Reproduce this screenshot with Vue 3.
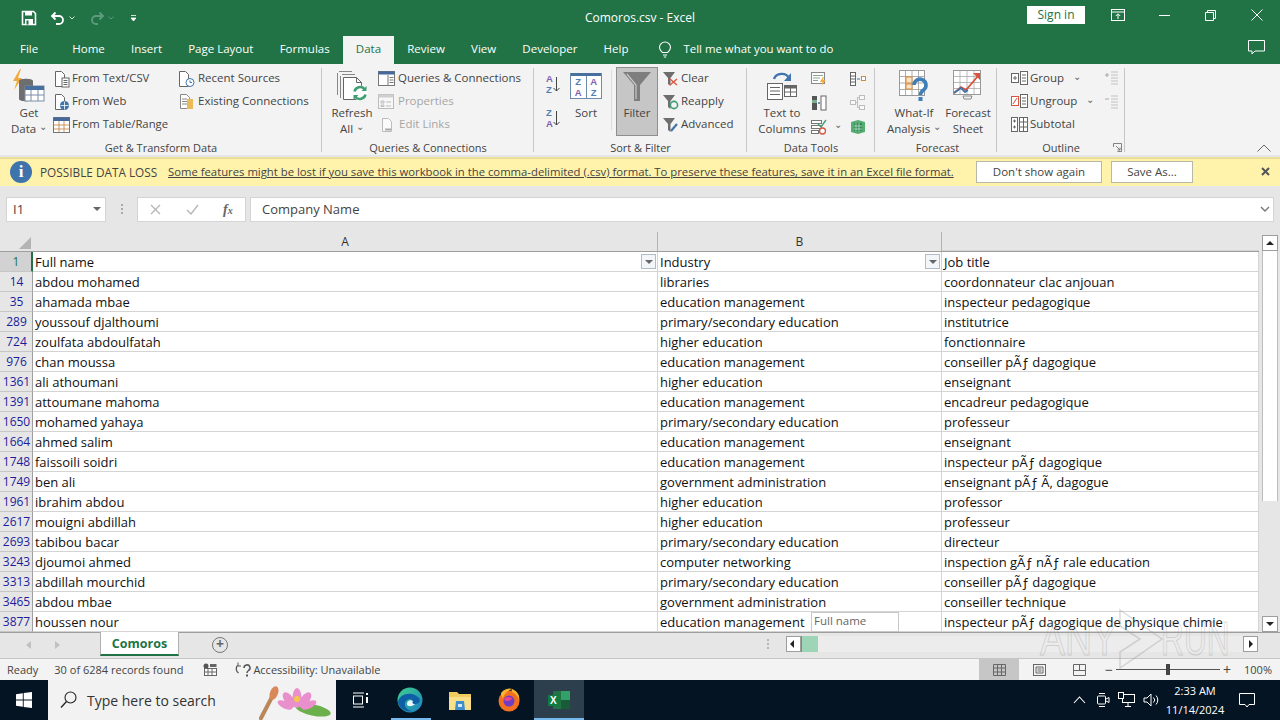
<script setup>
const rows = [
  ['14', 'abdou mohamed', 'libraries', 'coordonnateur clac anjouan'],
  ['35', 'ahamada mbae', 'education management', 'inspecteur pedagogique'],
  ['289', 'youssouf djalthoumi', 'primary/secondary education', 'institutrice'],
  ['724', 'zoulfata abdoulfatah', 'higher education', 'fonctionnaire'],
  ['976', 'chan moussa', 'education management', 'conseiller pÃƒ dagogique'],
  ['1361', 'ali athoumani', 'higher education', 'enseignant'],
  ['1391', 'attoumane mahoma', 'education management', 'encadreur pedagogique'],
  ['1650', 'mohamed yahaya', 'primary/secondary education', 'professeur'],
  ['1664', 'ahmed salim', 'education management', 'enseignant'],
  ['1748', 'faissoili soidri', 'education management', 'inspecteur pÃƒ dagogique'],
  ['1749', 'ben ali', 'government administration', 'enseignant pÃƒ Ã, dagogue'],
  ['1961', 'ibrahim abdou', 'higher education', 'professor'],
  ['2617', 'mouigni abdillah', 'higher education', 'professeur'],
  ['2693', 'tabibou bacar', 'primary/secondary education', 'directeur'],
  ['3243', 'djoumoi ahmed', 'computer networking', 'inspection gÃƒ nÃƒ rale education'],
  ['3313', 'abdillah mourchid', 'primary/secondary education', 'conseiller pÃƒ dagogique'],
  ['3465', 'abdou mbae', 'government administration', 'conseiller technique'],
  ['3877', 'houssen nour', 'education management', 'inspecteur pÃƒ dagogique de physique chimie']
]
const tabs = ['Home', 'Insert', 'Page Layout', 'Formulas', 'Data', 'Review', 'View', 'Developer', 'Help']
</script>

<template>
  <div class="app">
    <div class="titlebar">
      <div class="qat">
        <svg width="16" height="16" viewBox="0 0 16 16"><path d="M1.500 1.500h11l2 2v11h-13z" fill="none" stroke="#fff" stroke-width="1.600"/><rect x="4" y="1.500" width="7" height="4" fill="#fff"/><rect x="4" y="9" width="8" height="5.500" fill="#fff"/><rect x="5.500" y="10.500" width="2" height="4" fill="#217346"/></svg>
        <svg class="q-undo" width="16" height="14" viewBox="0 0 16 14"><path d="M5.500 1.500 2 5l3.500 3.500M2 5h7a4 4 0 0 1 0 8H6" fill="none" stroke="#fff" stroke-width="1.800"/></svg>
        <svg class="q-drop" width="6" height="4" viewBox="0 0 6 4"><path d="M.5.500 3 3 5.500.500" fill="none" stroke="#cfe3d8"/></svg>
        <svg class="q-redo" width="16" height="14" viewBox="0 0 16 14"><path d="M10.500 1.500 14 5l-3.500 3.500M14 5H7a4 4 0 0 0 0 8h2" fill="none" stroke="#5f9c7e" stroke-width="1.800"/></svg>
        <svg class="q-drop" width="6" height="4" viewBox="0 0 6 4"><path d="M.5.500 3 3 5.500.500" fill="none" stroke="#5f9c7e"/></svg>
        <svg class="q-more" width="7" height="7" viewBox="0 0 7 7"><path d="M1 .5h5M1 3h5L3.500 6z" fill="#fff" stroke="#fff" stroke-width=".8"/></svg>
      </div>
      <div class="doc-title">Comoros.csv  -  Excel</div>
      <div class="win-right">
        <div class="signin">Sign in</div>
        <svg class="w-display" width="14" height="12" viewBox="0 0 14 12"><rect x=".5" y=".5" width="13" height="11" fill="none" stroke="#fff"/><path d="M1 3h12M7 10V5M4.800 7 7 4.800 9.200 7" fill="none" stroke="#fff"/></svg>
        <svg class="w-min" width="11" height="1" viewBox="0 0 11 1"><rect width="11" height="1" fill="#fff"/></svg>
        <svg class="w-max" width="11" height="11" viewBox="0 0 11 11"><path d="M.5 2.500h8v8h-8zM2.500 2.500v-2h8v8h-2" fill="none" stroke="#fff"/></svg>
        <svg class="w-close" width="12" height="12" viewBox="0 0 12 12"><path d="M.5.500l11 11M11.500.500l-11 11" stroke="#fff"/></svg>
      </div>
    </div>

    <div class="tabbar">
      <div class="tab file">File</div>
      <div v-for="t in tabs" :key="t" class="tab" :class="{ active: t === 'Data' }">{{ t }}</div>
      <svg class="bulb" width="14" height="17" viewBox="0 0 14 17"><path d="M4.500 11.500C3 10 1.500 8.800 1.500 6.500a5.500 5.500 0 0 1 11 0c0 2.300-1.500 3.500-3 5zM5 14h4M5.800 16h2.400" fill="none" stroke="#fff" stroke-width="1.100"/></svg>
      <div class="tell">Tell me what you want to do</div>
      <svg class="comment" width="17" height="15" viewBox="0 0 17 15"><path d="M.5.500h16v10.500H7L4 14v-3H.5z" fill="none" stroke="#fff"/></svg>
    </div>

    <div class="ribbon">
      <div class="group g1">
        <div class="g-body">
          <div class="big w-get">
            <div class="big-icon">
              <svg width="34" height="34" viewBox="0 0 34 34"><path d="M8 0 1 12h4L2 21l8-12H6l3-9z" fill="#f2a93b"/><path d="M7 12c0-3 14-3 14 0v18c0 3-14 3-14 0z" fill="#6e6e6e"/><rect x="13" y="17" width="19" height="15" fill="#fff" stroke="#7a8ea6"/><rect x="13" y="17" width="19" height="4" fill="#47709e"/><path d="M19 21v11M26 21v11M13 26h19" stroke="#7a8ea6"/></svg>
            </div>
            <div class="big-text">Get<br>Data <span class="chev">⌄</span></div>
          </div>
          <div class="stack col-a">
            <div class="cmd"><svg width="16" height="18" viewBox="0 0 16 18"><path d="M1.500 1.500h6l3 3v12h-9z" fill="#fff" stroke="#666"/><rect x="8" y="8" width="7" height="9" fill="#fff" stroke="#666"/><path d="M9.500 10.500h4M9.500 12.500h4M9.500 14.500h4" stroke="#666"/></svg><span>From Text/CSV</span></div>
            <div class="cmd"><svg width="16" height="18" viewBox="0 0 16 18"><path d="M1.500 1.500h6l3 3v12h-9z" fill="#fff" stroke="#666"/><circle cx="10.500" cy="12.500" r="4.500" fill="#3f74ad"/><path d="M6.500 12.500h8M10.500 8.500v8" stroke="#fff" stroke-width=".8"/></svg><span>From Web</span></div>
            <div class="cmd tbl"><svg width="17" height="16" viewBox="0 0 17 16"><rect x=".5" y=".5" width="16" height="15" fill="#fff" stroke="#777"/><rect x=".5" y=".5" width="16" height="3.500" fill="#44699a"/><path d="M6 4v11M11 4v11M1 8h15M1 12h15" stroke="#c27f3a" stroke-width=".8"/></svg><span>From Table/Range</span></div>
          </div>
          <div class="stack col-b">
            <div class="cmd"><svg width="18" height="18" viewBox="0 0 18 18"><path d="M1.500 1.500h6l3 3v12h-9z" fill="#fff" stroke="#666"/><circle cx="12" cy="12.500" r="4" fill="#fff" stroke="#3f74ad"/><path d="M12 10.500v2h2" fill="none" stroke="#3f74ad"/></svg><span>Recent Sources</span></div>
            <div class="cmd"><svg width="18" height="18" viewBox="0 0 18 18"><path d="M2.500 1.500h6l3 3v11h-9z" fill="#fff" stroke="#888"/><path d="M4 6h5M4 8.500h5M4 11h5" stroke="#888"/><rect x="9" y="6" width="6" height="10" fill="#eab959"/></svg><span>Existing Connections</span></div>
          </div>
        </div>
        <div class="g-label">Get &amp; Transform Data</div>
      </div>

      <div class="group g2">
        <div class="g-body">
          <div class="big w-refresh">
            <div class="big-icon">
              <svg width="32" height="32" viewBox="0 0 32 32"><path d="M3 1.500h13M1.500 3v22" stroke="#888" fill="none"/><path d="M6 4.500h13M4.500 6v22" stroke="#888" fill="none"/><path d="M7.500 7.500h13l5 5v17h-18z" fill="#fff" stroke="#666"/><path d="M20.500 7.500v5h5" fill="none" stroke="#666"/><circle cx="24" cy="23" r="7.500" fill="#fff"/><path d="M18.500 21.500a5.800 5.800 0 0 1 10-2.500M29.500 24.500a5.800 5.800 0 0 1-10 2.500" fill="none" stroke="#3f9e72" stroke-width="2.600"/><path d="M30.500 16v5h-5zM17.500 30v-5h5z" fill="#3f9e72"/></svg>
            </div>
            <div class="big-text">Refresh<br>All <span class="chev">⌄</span></div>
          </div>
          <div class="stack col-q">
            <div class="cmd"><svg width="17" height="15" viewBox="0 0 17 15"><rect x=".5" y=".5" width="16" height="14" fill="#fff" stroke="#777"/><rect x=".5" y=".5" width="16" height="3" fill="#44699a"/><path d="M10 4v10M11.500 6.500h4M11.500 9h4M11.500 11.500h4" stroke="#777"/></svg><span>Queries &amp; Connections</span></div>
            <div class="cmd off"><svg width="17" height="15" viewBox="0 0 17 15"><rect x=".5" y=".5" width="15" height="14" fill="#f7f7f7" stroke="#bbb"/><rect x=".5" y=".5" width="15" height="3" fill="#cfcfcf"/><path d="M3 7h3v2H3zM3 11h3v1.500H3zM8 8h5M8 12h5" fill="none" stroke="#bbb"/></svg><span>Properties</span></div>
            <div class="cmd off el"><svg width="14" height="16" viewBox="0 0 14 16"><path d="M1.500 1.500h6l3 3v10h-9z" fill="#fbfbfb" stroke="#bbb"/><path d="M4 12.500h3M7 12.500h3" stroke="#aaa" stroke-width="2"/></svg><span>Edit Links</span></div>
          </div>
        </div>
        <div class="g-label">Queries &amp; Connections</div>
      </div>

      <div class="group g3">
        <div class="g-body">
          <div class="az-col">
            <div class="az"><span class="az-l"><b class="a1">A</b><b class="z1">Z</b></span><svg width="7" height="16" viewBox="0 0 7 16"><path d="M3.500 1v14M.5 12l3 3 3-3" fill="none" stroke="#444"/></svg></div>
            <div class="az"><span class="az-l"><b class="z1">Z</b><b class="a1">A</b></span><svg width="7" height="16" viewBox="0 0 7 16"><path d="M3.500 1v14M.5 12l3 3 3-3" fill="none" stroke="#444"/></svg></div>
          </div>
          <div class="big w-sort">
            <div class="big-icon">
              <div class="sort-ico">
                <div class="sort-h"></div>
                <div class="sort-g"><span><b class="z1">Z</b><b class="a1">A</b></span><span><b class="a1">A</b><b class="z1">Z</b></span></div>
              </div>
            </div>
            <div class="big-text">Sort</div>
          </div>
          <div class="thin"></div>
          <div class="big w-filter">
            <div class="big-icon">
              <svg width="28" height="29" viewBox="0 0 28 29"><path d="M0 0h28L17 13v16h-6V13z" fill="#7e7e7e"/><path d="M4 2l9 11v14" fill="none" stroke="#c9c9c9" stroke-width="1.200"/></svg>
            </div>
            <div class="big-text">Filter</div>
          </div>
          <div class="stack col-f">
            <div class="cmd"><svg width="17" height="16" viewBox="0 0 17 16"><path d="M1 1h12L8.500 7v8L6 13V7z" fill="#6e6e6e"/><path d="M8 8l7 6M15 8l-7 6" stroke="#e0563c" stroke-width="1.400"/></svg><span>Clear</span></div>
            <div class="cmd"><svg width="17" height="16" viewBox="0 0 17 16"><path d="M1 1h12L8.500 7v8L6 13V7z" fill="#6e6e6e"/><circle cx="12" cy="11" r="3.600" fill="none" stroke="#3f9e72" stroke-width="1.600"/></svg><span>Reapply</span></div>
            <div class="cmd"><svg width="17" height="16" viewBox="0 0 17 16"><path d="M1 1h12L8.500 7v8L6 13V7z" fill="#6e6e6e"/><path d="M9 14l6-7" stroke="#3f74ad" stroke-width="2.200"/></svg><span>Advanced</span></div>
          </div>
        </div>
        <div class="g-label">Sort &amp; Filter</div>
      </div>

      <div class="group g4">
        <div class="g-body">
          <div class="big w-text">
            <div class="big-icon">
              <svg width="32" height="32" viewBox="0 0 32 32"><path d="M8 9a8 7 0 0 1 15-1" fill="none" stroke="#3f74ad" stroke-width="2.400"/><path d="M25 3v8h-7z" fill="#3f74ad"/><rect x="1.500" y="13.500" width="15" height="16" fill="#fff" stroke="#666"/><path d="M4 17.500h10M4 21h10M4 24.500h10" stroke="#666"/><rect x="18.500" y="15.500" width="12" height="11" fill="#fff" stroke="#666"/><rect x="18.500" y="15.500" width="12" height="3" fill="#666"/><path d="M24.500 18v8M19 22h11" stroke="#666"/></svg>
            </div>
            <div class="big-text">Text to<br>Columns</div>
          </div>
          <div class="stack col-d1">
            <div class="dt"><svg width="16" height="14" viewBox="0 0 16 14"><rect x=".5" y=".5" width="13" height="11" fill="#fff" stroke="#888"/><path d="M2 3.500h10M2 6h7M2 8.500h5" stroke="#8aa68f"/><path d="M12 5l-3 5h2.500l-1 4 4-6h-2.500l1-3z" fill="#f2a93b"/></svg></div>
            <div class="dt"><svg width="16" height="16" viewBox="0 0 16 16"><rect x="1" y="1" width="5" height="14" fill="#555"/><rect x="10" y="1" width="5" height="14" fill="#fff" stroke="#666"/><rect x="1" y="5" width="5" height="3" fill="#7bb08b"/><path d="M7 8h2M8 7v2" stroke="#3f74ad"/></svg></div>
            <div class="dt"><svg width="16" height="16" viewBox="0 0 16 16"><rect x=".5" y="1.500" width="10" height="3" fill="#fff" stroke="#777"/><rect x=".5" y="6.500" width="10" height="3" fill="#fff" stroke="#777"/><rect x=".5" y="11.500" width="7" height="3" fill="#fff" stroke="#777"/><path d="M7 5l3 3 5-7" fill="none" stroke="#3f9e72" stroke-width="1.300"/><circle cx="11.500" cy="12" r="3" fill="#fff" stroke="#d9543c" stroke-width="1.300"/></svg><span class="chev dt-chev">⌄</span></div>
          </div>
          <div class="stack col-d2">
            <div class="dt"><svg width="16" height="14" viewBox="0 0 16 14"><rect x=".5" y=".5" width="5" height="13" fill="#fff" stroke="#666"/><path d="M1 4h4M1 7h4M1 10h4" stroke="#666"/><path d="M7 7h3" stroke="#3f74ad"/><rect x="11.500" y="4.500" width="4" height="4" fill="#fff" stroke="#d08a3a"/></svg></div>
            <div class="dt"><svg width="16" height="16" viewBox="0 0 16 16"><g fill="#f9f9f9" stroke="#bdbdbd"><rect x=".5" y="5.500" width="5" height="4"/><rect x="9.500" y=".5" width="5" height="4"/><rect x="9.500" y="10.500" width="5" height="4"/></g><path d="M5.500 7.500h2v-5h2M7.500 7.500v5h2" fill="none" stroke="#bdbdbd"/></svg></div>
            <div class="dt"><svg width="16" height="16" viewBox="0 0 16 16"><path d="M1 3l7-2 7 2v10l-7 2-7-2z" fill="#56ad72"/><path d="M4 4h8v8H4z" fill="#2f8a54"/><path d="M6 4v8M9 4v8M4 7h8M4 10h8" stroke="#b7e0c5" stroke-width=".8"/></svg></div>
          </div>
        </div>
        <div class="g-label">Data Tools</div>
      </div>

      <div class="group g5">
        <div class="g-body">
          <div class="big w-whatif">
            <div class="big-icon">
              <svg width="30" height="32" viewBox="0 0 30 32"><rect x=".5" y=".5" width="25" height="25" fill="#fff" stroke="#999"/><path d="M6.500 1v24M13 1v24M19.500 1v24M1 6.500h24M1 13h24M1 19.500h24" stroke="#999" stroke-width=".8"/><rect x="7" y="7" width="6" height="6" fill="#fbe3c5" stroke="#d98c38"/><rect x="7" y="14" width="6" height="5" fill="#fbe3c5" stroke="#d98c38"/><path d="M15 15a6 6 0 1 1 9.500 5c-2.500 1.700-3 2.500-3 5" fill="none" stroke="#3f7fb8" stroke-width="3.600"/><rect x="19.500" y="27" width="4" height="4" fill="#3f7fb8"/></svg>
            </div>
            <div class="big-text">What-If<br>Analysis <span class="chev">⌄</span></div>
          </div>
          <div class="big w-forecast">
            <div class="big-icon">
              <svg width="30" height="32" viewBox="0 0 30 32"><rect x=".5" y=".5" width="27" height="24" fill="#fff" stroke="#999"/><path d="M7 1v23M14 1v23M21 1v23M1 6.500h26M1 12.500h26M1 18.500h26" stroke="#aaa" stroke-width=".8"/><path d="M1 23l7-6 5 3 12-14" fill="none" stroke="#d9543c" stroke-width="1.800"/><path d="M1 23l7-5 4 4 3-2" fill="none" stroke="#3f74ad" stroke-width="1.800"/><path d="M20 3h7v7z" fill="#d9543c"/><path d="M10 26h9l-1 3h-7z" fill="none" stroke="#888"/></svg>
            </div>
            <div class="big-text">Forecast<br>Sheet</div>
          </div>
        </div>
        <div class="g-label">Forecast</div>
      </div>

      <div class="group g6">
        <div class="g-body">
          <div class="stack col-o">
            <div class="cmd"><svg width="17" height="15" viewBox="0 0 17 15"><rect x=".5" y="2.500" width="7" height="9" fill="#fff" stroke="#666"/><path d="M2 7h4M4 5v4" stroke="#666"/><rect x="9.500" y=".5" width="7" height="13" fill="#fff" stroke="#666"/><path d="M11 4h4M11 7h4M11 10h4" stroke="#666"/></svg><span>Group</span><i class="chev o-c">⌄</i></div>
            <div class="cmd"><svg width="17" height="15" viewBox="0 0 17 15"><rect x=".5" y="2.500" width="7" height="9" fill="#fff" stroke="#d9543c"/><path d="M2 10l4-6" stroke="#d9543c"/><rect x="9.500" y=".5" width="7" height="13" fill="#fff" stroke="#666"/><path d="M11 4h4M11 7h4M11 10h4" stroke="#666"/></svg><span>Ungroup</span><i class="chev o-c">⌄</i></div>
            <div class="cmd"><svg width="17" height="15" viewBox="0 0 17 15"><rect x=".5" y=".5" width="6" height="14" fill="#fff" stroke="#666"/><path d="M2 4h3M3.500 2.500v3M2 10h3M3.500 8.500v3" stroke="#666"/><rect x="8.500" y=".5" width="8" height="14" fill="#fff" stroke="#666"/><path d="M12.500 1v13M9 5h7M9 10h7" stroke="#666"/></svg><span>Subtotal</span></div>
          </div>
          <div class="stack col-o2">
            <div class="dt"><svg width="15" height="14" viewBox="0 0 15 14"><path d="M1 4h4M3 2v4" stroke="#a9a9a9"/><path d="M7 1h7M7 4h7M7 7h7M7 10h7M7 13h7" stroke="#c2c2c2"/></svg></div>
            <div class="dt"><svg width="15" height="14" viewBox="0 0 15 14"><path d="M1 4h4" stroke="#a9a9a9"/><path d="M7 1h7M7 4h7M7 7h7M7 10h7M7 13h7" stroke="#c2c2c2"/></svg></div>
          </div>
        </div>
        <div class="g-label">Outline
          <svg class="launcher" width="9" height="9" viewBox="0 0 9 9"><path d="M.5 4V.5H8.500V8.500H4.500M3 3l4 4M4.500 7H7V4.500" fill="none" stroke="#666" stroke-width=".8"/></svg>
        </div>
      </div>
      <svg class="collapse" width="14" height="8" viewBox="0 0 14 8"><path d="M.5 7.500 7 1l6.500 6.500" fill="none" stroke="#666"/></svg>
    </div>

    <div class="msgbar">
      <div class="info">i</div>
      <div class="msg-title">POSSIBLE DATA LOSS</div>
      <div class="msg-link">Some features might be lost if you save this workbook in the comma-delimited (.csv) format. To preserve these features, save it in an Excel file format.</div>
      <div class="msg-btn b1">Don't show again</div>
      <div class="msg-btn b2">Save As...</div>
      <svg class="msg-x" width="9" height="9" viewBox="0 0 9 9"><path d="M1 1l7 7M8 1 1 8" stroke="#555" stroke-width="2"/></svg>
    </div>

    <div class="formula">
      <div class="namebox"><span>I1</span><i class="tri"></i></div>
      <div class="dots"></div>
      <div class="fbtns">
        <svg width="11" height="11" viewBox="0 0 11 11"><path d="M1 1l9 9M10 1l-9 9" stroke="#b5b5b5" stroke-width="1.300"/></svg>
        <svg width="13" height="11" viewBox="0 0 13 11"><path d="M1 6l4 4 7-9" fill="none" stroke="#b5b5b5" stroke-width="1.300"/></svg>
        <span class="fx">f<small>x</small></span>
      </div>
      <div class="finput"><span>Company Name</span>
        <svg width="10" height="6" viewBox="0 0 10 6"><path d="M1 1l4 4 4-4" fill="none" stroke="#777" stroke-width="1.400"/></svg>
      </div>
    </div>

    <div class="sheet">
      <div class="grid">
        <div class="colhead">
          <div class="corner"><i></i></div>
          <div class="ch a">A</div>
          <div class="ch b">B</div>
          <div class="ch c"></div>
        </div>
        <div class="row head">
          <div class="rh sel">1</div>
          <div class="c a">Full name<i class="fbtn"><b></b></i></div>
          <div class="c b">Industry<i class="fbtn"><b></b></i></div>
          <div class="c c3">Job title</div>
        </div>
        <div v-for="r in rows" :key="r[0]" class="row">
          <div class="rh">{{ r[0] }}</div>
          <div class="c a">{{ r[1] }}</div>
          <div class="c b">{{ r[2] }}</div>
          <div class="c c3">{{ r[3] }}</div>
        </div>
        <div class="cell-tip">Full name</div>
      </div>
      <div class="vscroll">
        <div class="sb-btn"><i class="up"></i></div>
        <div class="sb-thumb"></div>
        <div class="sb-track"></div>
        <div class="sb-btn"><i class="down"></i></div>
      </div>
    </div>

    <div class="sheettabs">
      <div class="nav"><i class="l"></i><i class="r"></i></div>
      <div class="stab">Comoros</div>
      <div class="plus">+</div>
      <div class="hdots"></div>
      <div class="hscroll">
        <div class="hb"><i class="hl"></i></div>
        <div class="hthumb"></div>
        <div class="htrack"></div>
        <div class="hb"><i class="hr"></i></div>
      </div>
    </div>

    <div class="status">
      <span class="st-ready">Ready</span>
      <span class="st-rec">30 of 6284 records found</span>
      <svg class="st-mac" width="14" height="13" viewBox="0 0 14 13"><circle cx="3" cy="3" r="2.500" fill="#555"/><rect x="1.500" y="5.500" width="12" height="7" fill="#fff" stroke="#666"/><rect x="7" y="1" width="6.500" height="3" fill="#666"/><path d="M5 6v6M9 6v6M2 9h11" stroke="#666"/></svg>
      <svg class="st-acc" width="18" height="15" viewBox="0 0 18 15"><path d="M3.500 3.500a5 5 0 0 0 1 7.500" fill="none" stroke="#555" stroke-width="1.300"/><path d="M4 .5v3.500h3" fill="none" stroke="#555"/><path d="M10 6a3 3 0 1 1 4.500 2.500c-1.200.8-1.500 1.200-1.500 2.500" fill="none" stroke="#555" stroke-width="1.500"/><rect x="12" y="12.500" width="2" height="2" fill="#555"/></svg>
      <span class="st-a">Accessibility: Unavailable</span>
      <div class="views">
        <div class="view on"><svg width="13" height="12" viewBox="0 0 13 12"><path d="M.5.500h12v11H.5zM4.500.500v11M8.500.500v11M.5 4h12M.5 8h12" fill="none" stroke="#666"/></svg></div>
        <div class="view"><svg width="13" height="12" viewBox="0 0 13 12"><rect x=".5" y=".5" width="12" height="11" fill="none" stroke="#666"/><path d="M3 3h7v6H3zM4.500 5h4M4.500 7h4" fill="none" stroke="#666"/></svg></div>
        <div class="view"><svg width="13" height="12" viewBox="0 0 13 12"><path d="M.5.500h12v11H.5zM6.500.500v6M.5 6.500h12" fill="none" stroke="#666"/></svg></div>
      </div>
      <div class="zoomer">
        <span class="zm">−</span>
        <div class="slider"><i></i></div>
        <span class="zm">+</span>
      </div>
      <span class="pct">100%</span>
    </div>

    <div class="taskbar">
      <div class="start"><svg width="16" height="16" viewBox="0 0 16 16"><path d="M0 2.200 6.800 1.200v6.300H0zM7.700 1.100 16 0v7.500H7.700zM0 8.400h6.800v6.300L0 13.800zM7.700 8.400H16V16l-8.300-1.100z" fill="#fff"/></svg></div>
      <div class="search">
        <svg width="17" height="18" viewBox="0 0 17 18"><circle cx="10.500" cy="6.500" r="5.500" fill="none" stroke="#222" stroke-width="1.100"/><path d="M6.500 10.500 1 16.500" stroke="#222" stroke-width="1.300"/></svg>
        <span>Type here to search</span>
        <svg class="lotus" width="74" height="36" viewBox="0 0 74 36"><path d="M1 36 13 13" stroke="#b98758" stroke-width="4"/><ellipse cx="15" cy="9" rx="4" ry="7" fill="#d9885a" transform="rotate(22 15 9)"/><ellipse cx="54" cy="26" rx="18" ry="5.500" fill="#6bb04a" transform="rotate(12 54 26)"/><g fill="#e98fcb"><ellipse cx="38" cy="14" rx="4.500" ry="10"/><ellipse cx="30" cy="16" rx="4.500" ry="9" transform="rotate(-35 30 16)"/><ellipse cx="46" cy="16" rx="4.500" ry="9" transform="rotate(35 46 16)"/><ellipse cx="26" cy="21" rx="3.500" ry="8" transform="rotate(-65 26 21)"/><ellipse cx="50" cy="21" rx="3.500" ry="8" transform="rotate(65 50 21)"/></g><circle cx="38" cy="15" r="3" fill="#f3c84a"/></svg>
      </div>
      <div class="tb-ico"><svg width="17" height="16" viewBox="0 0 17 16"><rect x="1.500" y="4" width="9" height="8" fill="none" stroke="#fff"/><path d="M1 1h11M1 15h11" stroke="#fff"/><path d="M14 1h2v2h-2zM14 5h2v6h-2z" fill="#fff"/></svg></div>
      <div class="tb-ico w-on"><svg width="26" height="26" viewBox="0 0 26 26"><defs><linearGradient id="edgeG" x1="0" y1="0" x2="1" y2="1"><stop offset="0" stop-color="#3fd28a"/><stop offset="1" stop-color="#1c7fc4"/></linearGradient></defs><circle cx="13" cy="13" r="12.500" fill="url(#edgeG)"/><path d="M1 15C2 7 15 3 22 11c2 3 0 6-4 6-3 0-3-2-2-3-2-3-7-2-8 2-1 4 3 8 8 8-8 2-14-3-15-9z" fill="#0f5fa8"/><path d="M10 17c0-3 3-5 6-3-1 1-1 3 2 3-3 3-8 3-8 0z" fill="#fff" opacity=".9"/></svg></div>
      <div class="tb-ico"><svg width="24" height="22" viewBox="0 0 24 22"><path d="M1 3h8l2 2h12v16H1z" fill="#f3cc5e"/><path d="M1 8h22v13H1z" fill="#fbe08a"/><path d="M8 12h8l1 9H7z" fill="#3f8fd0"/><rect x="10" y="15" width="4" height="3" fill="#d9e7f2"/></svg></div>
      <div class="tb-ico"><svg width="24" height="24" viewBox="0 0 24 24"><circle cx="12" cy="13" r="10.500" fill="#f2701f"/><path d="M4 5c0 3 1 4 2 5 1-4 4-7 9-9-1 2 0 3 2 4 3 2 5 5 5 8a10 10 0 0 0-18-8z" fill="#f9b52f"/><circle cx="12" cy="13" r="5.500" fill="#6f3cc4"/><path d="M7 11c3-3 7-2 9 0-2 0-3 2-5 2s-3 0-4-2z" fill="#e8458c"/></svg></div>
      <div class="tb-ico active"><svg width="24" height="20" viewBox="0 0 24 20"><rect x="6" y="1" width="17" height="18" rx="1" fill="#217346"/><rect x="14" y="1" width="9" height="9" fill="#33a06a"/><rect x="14" y="10" width="9" height="9" fill="#185c37"/><rect x="1" y="5" width="11" height="11" fill="#107c41"/><text x="3" y="14" font-family="Liberation Sans, sans-serif" font-size="10" font-weight="700" fill="#fff">X</text></svg></div>
      <div class="tray">
        <svg width="13" height="8" viewBox="0 0 13 8"><path d="M1 7l5.500-6L12 7" fill="none" stroke="#fff" stroke-width="1.100"/></svg>
        <svg class="t2" width="14" height="16" viewBox="0 0 14 16"><rect x="1.500" y="4" width="8" height="8" rx="1" fill="none" stroke="#fff"/><path d="M10 7l3-1.500v5L10 9M3 1.500h6M3 14.500h6" fill="none" stroke="#fff"/></svg>
        <svg class="t3" width="17" height="16" viewBox="0 0 17 16"><rect x="4.500" y="2.500" width="12" height="8" fill="none" stroke="#fff"/><rect x=".5" y=".5" width="5" height="6" fill="#051423" stroke="#fff"/><path d="M10 11v3M7 14.500h6" stroke="#fff"/></svg>
        <svg class="t4" width="17" height="14" viewBox="0 0 17 14"><path d="M1 5h3l4-4v12L4 9H1z" fill="none" stroke="#fff"/><path d="M10.500 4.500a3.500 3.500 0 0 1 0 5M13 2.500a6.500 6.500 0 0 1 0 9" fill="none" stroke="#fff"/></svg>
        <div class="clock">2:33 AM<br>11/14/2024</div>
        <svg class="t5" width="16" height="15" viewBox="0 0 16 15"><path d="M.5.500h15v11H10l-2 2.500-2-2.500H.5z" fill="none" stroke="#fff"/></svg>
      </div>
    </div>

    <div class="watermark">
      <span class="wm-any">ANY</span>
      <svg width="46" height="62" viewBox="0 0 46 62"><path d="M2 2 44 31 2 60V44L22 31 2 18z" fill="none" stroke="#999" stroke-width="1.500"/></svg>
      <span class="wm-run">RUN</span>
    </div>
  </div>
</template>

<style scoped>
.app {
  width: 1280px;
  height: 720px;
  position: relative;
  overflow: hidden;
  display: flex;
  flex-direction: column;
  background: #e6e6e6;
  font-family: "Open Sans", "Noto Sans", sans-serif;
  font-size: 11.5px;
  color: #444;
}

/* title bar */
.titlebar {
  height: 36px;
  background: #217346;
  display: flex;
  align-items: center;
  position: relative;
  flex: none;
}
.qat {
  display: flex;
  align-items: center;
  padding-left: 21px;
}
.q-undo { margin-left: 13px; }
.q-drop { margin-left: 3px; }
.q-redo { margin-left: 14px; }
.q-more { margin-left: 16px; }
.doc-title {
  position: absolute;
  left: 0;
  right: 0;
  top: 9px;
  text-align: center;
  color: #fff;
  white-space: pre;
  font-size: 12px;
  line-height: 18px;
}
.win-right {
  margin-left: auto;
  display: flex;
  align-items: center;
  position: relative;
  padding: 0 17px 6px 0;
}
.signin {
  width: 58px;
  height: 18px;
  line-height: 18px;
  background: #fff;
  color: #217346;
  text-align: center;
  font-size: 12px;
}
.w-display { margin-left: 26px; }
.w-min { margin-left: 34px; }
.w-max { margin-left: 35px; }
.w-close { margin-left: 35px; }

/* tabs */
.tabbar {
  height: 28px;
  background: #217346;
  display: flex;
  align-items: stretch;
  color: #fff;
  flex: none;
}
.tab {
  padding: 0 13.100px;
  line-height: 26px;
  white-space: nowrap;
}
.tab.file {
  padding: 0 21px 0 20px;
}
.tab.active {
  background: #f3f3f3;
  color: #217346;
}
.bulb { margin: 5px 0 0 16px; }
.tell {
  margin-left: 12px;
  line-height: 26px;
  font-size: 11.4px;
}
.comment { margin: 4px 15px 0 auto; }

/* ribbon */
.ribbon {
  height: 91px;
  background: #f3f3f3;
  display: flex;
  position: relative;
  flex: none;
}
.group {
  display: flex;
  flex-direction: column;
  padding-top: 3px;
  position: relative;
  flex: none;
}
.group::after {
  content: "";
  position: absolute;
  right: 0;
  top: 4px;
  bottom: 3px;
  width: 1px;
  background: #c6c6c6;
}
.g1 { width: 322px; }
.g2 { width: 212px; }
.g3 { width: 213px; }
.g4 { width: 128px; }
.g5 { width: 122px; padding-left: 3px; box-sizing: border-box; }
.g6 { width: 128px; }
.g-body {
  height: 73px;
  display: flex;
}
.g-label {
  text-align: center;
  height: 15px;
  line-height: 15px;
  color: #444;
  font-size: 11px;
  position: relative;
}
.big {
  display: flex;
  flex-direction: column;
  align-items: center;
  flex: none;
}
.big-icon {
  height: 38px;
  display: flex;
  align-items: center;
  justify-content: center;
}
.big-text {
  text-align: center;
  line-height: 16px;
  white-space: nowrap;
}
.chev {
  font-size: 10px;
  font-style: normal;
  color: #666;
  position: relative;
  top: -3px;
}
.stack {
  display: flex;
  flex-direction: column;
  flex: none;
}
.cmd {
  height: 23px;
  display: flex;
  align-items: center;
  white-space: nowrap;
}
.cmd span {
  margin-top: -2px;
}
.cmd svg {
  flex: none;
  margin-right: 2px;
}
.col-a .cmd span {
  font-size: 11.300px;
}
.cmd.off {
  color: #a6a6a6;
}
.dt {
  height: 24px;
  display: flex;
  align-items: center;
}
.w-get { width: 44px; margin-left: 7px; }
.col-a { margin-left: 3px; width: 124px; }
.col-a .tbl { margin-left: -1px; }
.w-refresh { width: 44px; margin-left: 8px; }
.col-q { margin-left: 4px; }
.col-q .cmd svg { margin-right: 3px; }
.col-q .el svg { margin: 0 4px 0 3px; }
.az-col {
  margin-left: 12px;
  padding-top: 6px;
  width: 16px;
  display: flex;
  flex-direction: column;
  gap: 12px;
}
.az {
  display: flex;
  align-items: center;
  height: 22px;
}
.az-l {
  display: flex;
  flex-direction: column;
  font: 700 9.500px/11px "Liberation Sans", sans-serif;
}
.a1 { color: #7c5fb0; font-weight: 700; }
.z1 { color: #4f7fb5; font-weight: 700; }
.w-sort { width: 44px; margin-left: 2px; }
.sort-ico {
  width: 30px;
  height: 25px;
  border: 1px solid #6d8bab;
  border-top: 0;
  background: #fff;
}
.sort-h {
  height: 3px;
  background: #47709e;
}
.sort-g {
  display: flex;
  height: 22px;
}
.sort-g span {
  flex: 1;
  display: flex;
  flex-direction: column;
  align-items: center;
  justify-content: center;
  font: 700 9.500px/11px "Liberation Sans", sans-serif;
}
.sort-g span + span {
  border-left: 1px solid #6d8bab;
}
.thin {
  width: 1px;
  height: 60px;
  background: #dcdcdc;
  margin: 3px 4px 0 3px;
}
.w-filter {
  width: 42px;
  height: 69px;
  background: #c6c6c6;
  border: 1px solid #8e8e8e;
  box-sizing: border-box;
}
.w-filter .big-icon { height: 37px; }
.col-f { margin-left: 4px; }
.w-text { width: 56px; margin-left: 7px; }
.col-d1 { width: 39px; margin-left: 1px; }
.dt-chev { margin-left: 7px; }
.w-whatif { width: 58px; margin-left: 7px; }
.w-forecast { width: 50px; }
.col-o {
  margin-left: 14px;
  width: 93px;
}
.o-c { margin-left: 9px; }
.col-o2 { margin-top: -1px; }
.launcher {
  position: absolute;
  right: 3px;
  top: 3px;
}
.collapse {
  position: absolute;
  right: 9px;
  bottom: 3px;
}

/* message bar */
.msgbar {
  margin-top: 2px;
  height: 29px;
  background: #fff2ab;
  border-top: 2px solid #ecdf9b;
  padding-bottom: 2px;
  box-sizing: border-box;
  display: flex;
  align-items: center;
  position: relative;
  flex: none;
  white-space: nowrap;
}
.info {
  width: 22px;
  height: 22px;
  border-radius: 50%;
  background: #3e73ab;
  color: #fff;
  font: 700 17px/22px "Liberation Serif", serif;
  text-align: center;
  margin-left: 10px;
  flex: none;
}
.msg-title {
  margin-left: 8px;
  width: 128px;
  font-size: 11.800px;
}
.msg-link {
  text-decoration: underline;
  width: 808px;
  font-size: 11.300px;
}
.msg-btn {
  height: 22px;
  line-height: 20px;
  background: #fff;
  border: 1px solid #b8b8a8;
  box-sizing: border-box;
  text-align: center;
}
.b1 { width: 126px; }
.b2 { width: 82px; margin-left: 9px; }
.msg-x { margin-left: 68px; }

/* formula bar */
.formula {
  margin-top: 11px;
  height: 25px;
  display: flex;
  flex: none;
}
.namebox {
  margin-left: 6px;
  width: 100px;
  background: #fff;
  border: 1px solid #d4d4d4;
  box-sizing: border-box;
  display: flex;
  align-items: center;
  justify-content: space-between;
  padding: 0 4px 2px 6px;
  font-size: 13px;
}
.tri {
  width: 0;
  height: 0;
  border-left: 4px solid transparent;
  border-right: 4px solid transparent;
  border-top: 4px solid #666;
}
.dots {
  width: 2px;
  margin: 7px 14px 7px 15px;
  background: repeating-linear-gradient(#aaa 0 2px, transparent 2px 4px);
}
.fbtns {
  width: 109px;
  background: #fff;
  border: 1px solid #d4d4d4;
  box-sizing: border-box;
  display: flex;
  align-items: center;
  padding-left: 12px;
  gap: 25px;
}
.fx {
  font: italic 700 14px "Liberation Serif", serif;
  color: #666;
  margin-left: -1px;
}
.fx small { font-size: 10px; }
.finput {
  margin-left: 4px;
  width: 1024px;
  background: #fff;
  border: 1px solid #d4d4d4;
  box-sizing: border-box;
  display: flex;
  align-items: center;
  justify-content: space-between;
  padding: 0 3px 2px 11px;
  font-size: 13px;
}

/* sheet */
.sheet {
  margin-top: 10px;
  height: 400px;
  display: flex;
  flex: none;
}
.grid {
  width: 1259px;
  position: relative;
  overflow: hidden;
  flex: none;
  color: #111;
}
.colhead {
  height: 20px;
  display: flex;
  border-bottom: 1px solid #9e9e9e;
  box-sizing: border-box;
  background: #e6e6e6;
}
.corner {
  width: 33px;
  position: relative;
  flex: none;
}
.corner i {
  position: absolute;
  right: 2px;
  bottom: 2px;
  width: 0;
  height: 0;
  border-left: 12px solid transparent;
  border-bottom: 12px solid #b4b4b4;
}
.ch {
  text-align: center;
  line-height: 19px;
  font-size: 12px;
  color: #333;
  border-right: 1px solid #b4b4b4;
  box-sizing: border-box;
  flex: none;
}
.ch.a { width: 625px; }
.ch.b { width: 284px; }
.ch.c { width: 317px; border-right: 0; }
.row {
  height: 20px;
  display: flex;
  background: #fff;
  font-size: 13px;
  line-height: 20px;
}
.rh {
  width: 33px;
  flex: none;
  box-sizing: border-box;
  background: #e6e6e6;
  border-right: 1px solid #9e9e9e;
  border-bottom: 1px solid #c6c6c6;
  text-align: center;
  color: #1c1c9c;
  font-size: 12px;
  line-height: 20px;
  padding-left: 1px;
}
.rh.sel {
  background: #d2d2d2;
  color: #217346;
  border-right: 2px solid #217346;
}
.c {
  box-sizing: border-box;
  border-right: 1px solid #d4d4d4;
  border-bottom: 1px solid #d4d4d4;
  padding-left: 2px;
  white-space: nowrap;
  overflow: hidden;
  position: relative;
  flex: none;
}
.c.a { width: 625px; }
.c.b { width: 284px; }
.c.c3 { width: 317px; }
.fbtn {
  position: absolute;
  right: 1px;
  top: 2px;
  width: 15px;
  height: 15px;
  background: #f3f6f9;
  border: 1px solid #b0bcc8;
  box-sizing: border-box;
}
.fbtn b {
  position: absolute;
  left: 3px;
  top: 5px;
  border-left: 4px solid transparent;
  border-right: 4px solid transparent;
  border-top: 4px solid #666;
}
.cell-tip {
  position: absolute;
  left: 811px;
  top: 380px;
  width: 88px;
  height: 20px;
  background: #fff;
  border: 1px solid #c8c8c8;
  box-sizing: border-box;
  padding-left: 2px;
  font-size: 11.500px;
  line-height: 16px;
  color: #666;
}
.vscroll {
  margin-left: 3px;
  width: 16px;
  display: flex;
  flex-direction: column;
  flex: none;
  margin-top: 3px;
}
.sb-btn {
  height: 16px;
  background: #fff;
  border: 1px solid #9e9e9e;
  box-sizing: border-box;
  position: relative;
  flex: none;
}
.sb-btn i {
  position: absolute;
  left: 3px;
  top: 5px;
  border-left: 4px solid transparent;
  border-right: 4px solid transparent;
}
.sb-btn .up { border-bottom: 4px solid #222; }
.sb-btn .down { border-top: 4px solid #222; }
.sb-thumb {
  height: 250px;
  background: #fff;
  border-left: 1px solid #bdbdbd;
  border-right: 1px solid #bdbdbd;
  flex: none;
}
.sb-track { flex: 1; }

/* sheet tabs */
.sheettabs {
  height: 27px;
  display: flex;
  align-items: flex-start;
  border-bottom: 1px solid #c6c6c6;
  box-sizing: border-box;
  flex: none;
  border-top: 1px solid #9e9e9e;
}
.nav {
  width: 100px;
  display: flex;
  padding: 8px 0 0 26px;
  box-sizing: border-box;
  gap: 24px;
  flex: none;
}
.nav i {
  border-top: 4px solid transparent;
  border-bottom: 4px solid transparent;
}
.nav .l { border-right: 5px solid #c0c0c0; }
.nav .r { border-left: 5px solid #c0c0c0; }
.stab {
  width: 79px;
  height: 24px;
  background: #fff;
  border-left: 1px solid #b0b0b0;
  border-right: 1px solid #b0b0b0;
  border-bottom: 2px solid #217346;
  box-sizing: border-box;
  margin-top: -1px;
  text-align: center;
  line-height: 24px;
  font-weight: 700;
  color: #217346;
  font-size: 12.500px;
}
.plus {
  width: 16px;
  height: 16px;
  border: 1.500px solid #777;
  border-radius: 50%;
  box-sizing: border-box;
  margin: 4px 0 0 33px;
  text-align: center;
  line-height: 12px;
  color: #666;
  font-size: 14px;
  font-weight: 700;
}
.hdots {
  width: 2px;
  height: 11px;
  margin: 6px 17px 0 539px;
  background: repeating-linear-gradient(#b5b5b5 0 2px, transparent 2px 4px);
}
.hscroll {
  margin-top: 3px;
  width: 472px;
  height: 16px;
  display: flex;
}
.hb {
  width: 15px;
  background: #fff;
  border: 1px solid #9e9e9e;
  box-sizing: border-box;
  position: relative;
  flex: none;
}
.hb i {
  position: absolute;
  top: 3px;
  border-top: 4px solid transparent;
  border-bottom: 4px solid transparent;
}
.hl { left: 3px; border-right: 4px solid #222; }
.hr { left: 5px; border-left: 4px solid #222; }
.hthumb {
  width: 17px;
  background: #9fd5b7;
  border-left: 1px solid #5d9c7a;
  box-sizing: border-box;
  flex: none;
}
.htrack {
  flex: 1;
  background: #ececec;
}

/* status bar */
.status {
  height: 21px;
  background: #f3f3f3;
  display: flex;
  align-items: center;
  position: relative;
  flex: none;
  white-space: nowrap;
  font-size: 11px;
}
.st-ready { margin-left: 7px; }
.st-rec { margin-left: 16px; }
.st-mac { margin-left: 20px; }
.st-acc { margin-left: 17px; }
.st-a { margin-left: 1px; }
.views {
  margin-left: auto;
  display: flex;
  height: 100%;
}
.view {
  width: 40px;
  display: flex;
  align-items: center;
  justify-content: center;
}
.view.on { background: #c6c6c6; }
.zoomer {
  display: flex;
  align-items: center;
  margin-left: 6px;
  width: 126px;
  gap: 3px;
}
.zm {
  font-size: 14px;
  color: #444;
  line-height: 14px;
}
.slider {
  flex: 1;
  height: 1px;
  background: #555;
  position: relative;
}
.slider i {
  position: absolute;
  left: 50px;
  top: -5px;
  width: 4px;
  height: 11px;
  background: #444;
}
.pct {
  margin: 0 8px 0 13px;
}

/* taskbar */
.taskbar {
  height: 40px;
  background: #051423;
  display: flex;
  align-items: stretch;
  flex: none;
  color: #fff;
}
.start {
  width: 48px;
  display: flex;
  align-items: center;
  justify-content: center;
  flex: none;
}
.search {
  width: 288px;
  background: #f2f2f2;
  color: #333;
  display: flex;
  align-items: center;
  padding-left: 12px;
  box-sizing: border-box;
  font-size: 14px;
  position: relative;
  flex: none;
}
.search span { margin-left: 10px; }
.lotus {
  position: absolute;
  right: 3px;
  bottom: 0;
}
.tb-ico {
  width: 49.500px;
  display: flex;
  align-items: center;
  justify-content: center;
  box-sizing: border-box;
  flex: none;
  position: relative;
}
.w-on::after {
  content: "";
  position: absolute;
  left: 5px;
  right: 4px;
  bottom: 0;
  height: 2px;
  background: #76b9ed;
}
.tb-ico.active {
  background: #2d3e4c;
  box-shadow: inset 0 -2px 0 #76b9ed;
}
.tray {
  margin-left: auto;
  display: flex;
  align-items: center;
  font-size: 11px;
}
.t2 { margin-left: 10px; }
.t3 { margin-left: 8px; }
.t4 { margin-left: 8px; }
.clock {
  margin-left: 2px;
  text-align: center;
  line-height: 19px;
  width: 66px;
}
.t5 { margin: 0 25px 0 11px; }

.watermark {
  position: absolute;
  left: 1040px;
  top: 608px;
  display: flex;
  align-items: center;
  font: 400 48px/62px "Liberation Sans", sans-serif;
  color: transparent;
  -webkit-text-stroke: 1px #999;
  opacity: 0.35;
  pointer-events: none;
}
.wm-any {
  display: block;
  width: 78px;
  transform: scaleX(0.78);
  transform-origin: left center;
}
.wm-run {
  display: block;
  width: 69px;
  transform: scaleX(0.66);
  transform-origin: left center;
  margin-left: -3px;
}
</style>
